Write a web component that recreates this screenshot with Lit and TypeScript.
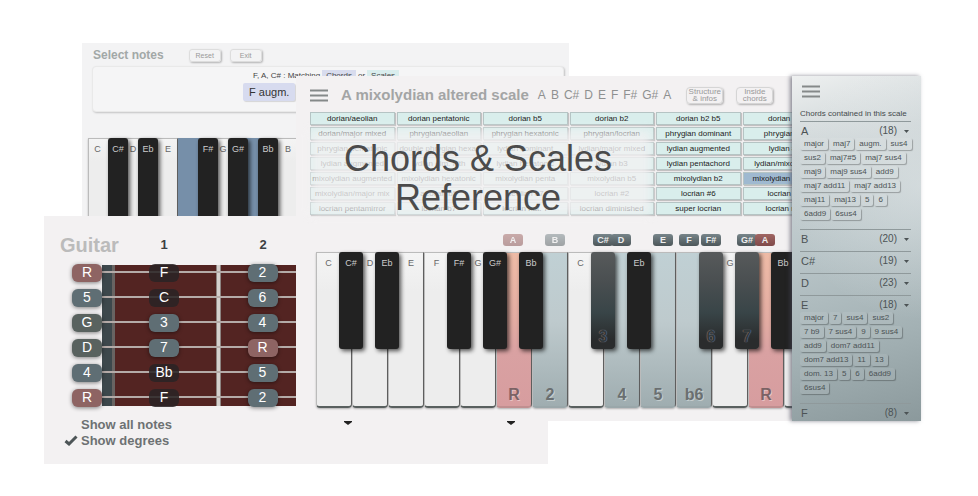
import { LitElement, html, css, svg, nothing } from "lit";
import { customElement, property } from "lit/decorators.js";
import { classMap } from "lit/directives/class-map.js";

type Tone = "" | "root" | "on" | "blue";
interface Black { name: string; tone?: Tone; degree?: string; badge?: string }
interface Key { name: string; lean: "left" | "mid" | "right"; tone?: Tone; degree?: string; badge?: Tone; faint?: boolean; black?: Black }

const resetButton = css`
  *, *::before, *::after { box-sizing: border-box; }
  button { font: inherit; color: inherit; border: 0; padding: 0; margin: 0; background: none; cursor: pointer; }
  p, h1, h2, h3, ul { margin: 0; padding: 0; }
`;

@customElement("piano-keyboard")
class PianoKeyboard extends LitElement {
  @property({ attribute: false }) keys: Key[] = [];

  static styles = [resetButton, css`
    :host { display: flex; isolation: isolate; font-size: 9px; --w: var(--white-width, 36px); --b: var(--black-width, 24px); }
    .slot { position: relative; flex: none; width: var(--w); height: var(--key-height, 156px); }
    .white {
      display: flex; flex-direction: column; justify-content: space-between; align-items: center;
      width: 100%; height: 100%; padding: 4px 0 2px; color: #666;
      background: linear-gradient(#f4f4f4, #ededed 25%);
      border: 1px solid #bbb; border-right-color: #666; border-bottom: 2px solid #59605f; border-radius: 0 0 4px 4px;
      box-shadow: 0 1px 2px #0004;
    }
    .white.on { background: linear-gradient(#c0d0d4, #becacd 45%, #9fadb0); border-bottom-color: #9aa7aa; }
    .white.root { background: linear-gradient(#eebba6, #e2aba2 45%, #d9a1a2 65%, #d79d9f); border-bottom-color: #c08f90; }
    .white.blue { background: #768fa9; border-color: #768fa9; }
    .name { height: 12px; line-height: 12px; }
    .left .name { margin-right: 11px; }
    .right .name { margin-left: 10px; }
    .degree { font-weight: 700; font-size: 16px; line-height: 18px; color: #6a6f70; text-shadow: 1px 1px 0 #fff6; }
    .root .degree { color: #7b6264; }
    .black {
      position: absolute; z-index: 1; top: 0; right: calc(var(--b) / -2 + var(--shift, 1px));
      display: flex; flex-direction: column; justify-content: space-between; align-items: center;
      width: var(--b); height: var(--black-height, 97px); padding: 5px 0 3px; color: #ccc;
      background: #222; border-radius: 3px; box-shadow: 2px 2px 4px #000a;
    }
    .black.on { background: linear-gradient(#575a5b, #4a4f51 30%, #394548 62%, #2a2c2d 90%); }
    .black .degree { color: #32393b; text-shadow: 0 0 1px #aab; }
    .badge {
      position: absolute; z-index: 2; top: -18px; width: 20px; height: 12px; border-radius: 3px;
      font-weight: 700; font-size: 9px; line-height: 12px; text-align: center; color: #eee;
      background: linear-gradient(#77858a, #4c5659);
    }
    .badge.root { background: linear-gradient(#a06663, #804a4a); }
    .badge.faint { opacity: .5; }
    .badge.left { left: 3px; }
    .badge.mid { left: 7px; }
    .badge.right { left: 13px; }
    .badge.sharp { right: calc(1px - 10px); }
  `];

  render() {
    return this.keys.map(k => html`
      <div class="slot">
        <button class=${classMap({ white: true, [k.lean]: true, [k.tone || "plain"]: true })} aria-label=${k.name}>
          <span class="name">${k.tone ? nothing : k.name}</span>
          ${k.degree ? html`<span class="degree">${k.degree}</span>` : nothing}
        </button>
        ${k.badge ? html`<span class=${classMap({ badge: true, [k.badge]: true, [k.lean]: true, faint: !!k.faint })}>${k.name}</span>` : nothing}
        ${k.black ? html`
          <button class=${classMap({ black: true, on: k.black.tone === "on" })} aria-label=${k.black.name}>
            <span class="name">${k.black.tone ? nothing : k.black.name}</span>
            ${k.black.degree ? html`<span class="degree">${k.black.degree}</span>` : nothing}
          </button>
          ${k.black.badge ? html`<span class="badge sharp">${k.black.badge}</span>` : nothing}` : nothing}
      </div>`);
  }
}

const selectKeys: Key[] = [
  { name: "C", lean: "left", black: { name: "C#" } },
  { name: "D", lean: "mid", black: { name: "Eb" } },
  { name: "E", lean: "right" },
  { name: "F", lean: "left", tone: "blue", black: { name: "F#" } },
  { name: "G", lean: "mid", black: { name: "G#" } },
  { name: "A", lean: "mid", tone: "blue", black: { name: "Bb" } },
  { name: "B", lean: "right" },
];

const scaleKeys: Key[] = [
  { name: "C", lean: "left", black: { name: "C#" } },
  { name: "D", lean: "mid", black: { name: "Eb" } },
  { name: "E", lean: "right" },
  { name: "F", lean: "left", black: { name: "F#" } },
  { name: "G", lean: "mid", black: { name: "G#" } },
  { name: "A", lean: "mid", tone: "root", degree: "R", badge: "root", faint: true, black: { name: "Bb" } },
  { name: "B", lean: "right", tone: "on", degree: "2", badge: "on", faint: true },
  { name: "C", lean: "left", black: { name: "C#", tone: "on", degree: "3", badge: "C#" } },
  { name: "D", lean: "mid", tone: "on", degree: "4", badge: "on", black: { name: "Eb" } },
  { name: "E", lean: "right", tone: "on", degree: "5", badge: "on" },
  { name: "F", lean: "left", tone: "on", degree: "b6", badge: "on", black: { name: "F#", tone: "on", degree: "6", badge: "F#" } },
  { name: "G", lean: "mid", black: { name: "G#", tone: "on", degree: "7", badge: "G#" } },
  { name: "A", lean: "mid", tone: "root", degree: "R", badge: "root", black: { name: "Bb" } },
  { name: "B", lean: "right" },
];

const scales = [
  ["dorian/aeolian", "dorian pentatonic", "dorian b5", "dorian b2", "dorian b2 b5", "dorian #4"],
  ["dorian/major mixed", "phrygian/aeolian", "phrygian hexatonic", "phrygian/locrian", "phrygian dominant", "phrygian b4"],
  ["phrygian pentatonic", "double phrygian hexa.", "lydian dominant", "lydian/major mixed", "lydian augmented", "lydian #2"],
  ["lydian augmented", "lydian dim. fifth", "lydian hexatonic", "lydian b3", "lydian pentachord", "lydian/mixolydian"],
  ["mixolydian augmented", "mixolydian hexatonic", "mixolydian penta", "mixolydian b5", "mixolydian b2", "mixolydian altered"],
  ["mixolydian/major mix", "aeolian b5", "aeolian #7", "locrian #2", "locrian #6", "locrian #7"],
  ["locrian pentamirror", "locrian b7", "locrian nat. 7", "locrian diminished", "super locrian", "locrian maj"],
];

const chordGroups: { note: string; count: number; chords?: string[] }[] = [
  { note: "A", count: 18, chords: ["major", "maj7", "augm.", "sus4", "sus2", "maj7#5", "maj7 sus4", "maj9", "maj9 sus4", "add9", "maj7 add11", "maj7 add13", "maj11", "maj13", "5", "6", "6add9", "6sus4"] },
  { note: "B", count: 20 },
  { note: "C#", count: 19 },
  { note: "D", count: 23 },
  { note: "E", count: 18, chords: ["major", "7", "sus4", "sus2", "7 b9", "7 sus4", "9", "9 sus4", "add9", "dom7 add11", "dom7 add13", "11", "13", "dom. 13", "5", "6", "6add9", "6sus4"] },
  { note: "F", count: 8 },
];

const strings = [["R", "F", "2"], ["5", "C", "6"], ["G", "3", "4"], ["D", "7", "R"], ["4", "Bb", "5"], ["R", "F", "2"]];

const noteTone = (n: string, col: number) =>
  n === "R" ? "root" : /[A-G]/.test(n) ? (col ? "dark" : "open") : "slate";

@customElement("select-notes")
class SelectNotes extends LitElement {
  static styles = [resetButton, css`
    :host { display: flex; flex-direction: column; background: #f3f3f4; padding: 5px 5px 0; overflow: hidden; }
    header { display: flex; flex: none; align-items: center; gap: 9px; height: 14px; padding-left: 6px; }
    h2 { font-size: 12px; line-height: 14px; color: #a2a8a7; margin-right: 16px; }
    header button { width: 32px; height: 13px; font-size: 7px; color: #999; border: 1px solid #ddd; border-radius: 3px; box-shadow: 1px 1px 2px #0004; }
    .panel { flex: none; height: 46px; margin: 4px 0 0 5px; padding: 3px 0 0 150px; border: 1px solid #e9e9e9; border-radius: 4px; background: #f5f5f6; box-shadow: 1px 1px 2px #0003; }
    p { display: flex; align-items: center; gap: 2px; height: 10px; padding-left: 10px; font-size: 8px; white-space: nowrap; color: #444; }
    p button { height: 10px; padding: 0 4px; background: #d8dcee; }
    p button.scales { background: #d9eded; }
    .chord { height: 18px; margin-top: 3px; padding: 0 6px; font-size: 11px; line-height: 18px; color: #333; background: #d7dbef; border-radius: 2px; box-shadow: 1px 1px 1px #0002; }
    piano-keyboard { --white-width: 30px; --black-width: 20px; --key-height: 90px; --black-height: 86px; --shift: 0px; margin: 26px 0 0 1px; }
  `];
  render() {
    return html`
      <header><h2>Select notes</h2><button>Reset</button><button>Exit</button></header>
      <section class="panel">
        <p>F, A, C# : Matching <button>Chords</button> or <button class="scales">Scales</button></p>
        <button class="chord">F augm.</button>
      </section>
      <piano-keyboard .keys=${selectKeys}></piano-keyboard>`;
  }
}

@customElement("guitar-neck")
class GuitarNeck extends LitElement {
  static styles = [resetButton, css`
    :host { display: block; background: #f3f1f2; padding: 17px 0 16px 16px; }
    .head { display: grid; grid-template-columns: 60px 88px 110px; align-items: center; text-align: center; font-weight: 700; font-size: 13px; line-height: 24px; color: #3c4042; }
    h2 { font-size: 20px; line-height: 24px; color: #bbb; text-align: left; }
    .neck { position: relative; display: grid; gap: 7px; margin-top: 7px; padding: 0 0 0 12px; }
    .board { position: absolute; inset: 1px 0 1px 42px; width: 240px;
      background: linear-gradient(90deg, #3d484c 0 10px, #686462 10px 13px, #532422 13px 114px, #8d8481 114px 115px, #d5d1ce 115px 118px, #8d8481 118px 119px, #532422 119px); }
    .string { position: relative; display: grid; grid-template-columns: 30px 14px 96px 101px; align-items: center; height: 18px; }
    .string::before { content: ""; position: absolute; left: 29px; top: 7px; width: 210px; height: 2px; background: #b5aba8; }
    .note { position: relative; justify-self: center; width: 30px; height: 18px; border-radius: 6px; color: #fff; font-size: 14px; line-height: 16px; text-align: center; box-shadow: 0 1px 4px #0007; }
    .root { background: #8e6463; }
    .slate { background: #5f6e74; }
    .open { background: #59625f; }
    .dark { background: #292425dd; box-shadow: none; }
    .fret1 { grid-column: 3; }
    .options { display: grid; gap: 1px; margin-top: 10px; font-weight: 700; font-size: 13px; line-height: 15px; color: #6d7173; }
    label { display: grid; grid-template-columns: 21px auto; justify-content: start; align-items: center; }
    label input { grid-area: 1 / 1; appearance: none; width: 15px; height: 13px; margin: 0 0 0 3px; }
    label svg { grid-area: 1 / 1; margin-left: 4px; pointer-events: none; visibility: hidden; }
    input:checked + svg { visibility: visible; }
  `];
  private option(text: string, on: boolean) {
    return html`<label><input type="checkbox" .checked=${on}>
      ${html`<svg width="14" height="11" viewBox="0 0 14 11">${svg`<path d="M1.5 6 L5 9 L12.5 1.5" fill="none" stroke="#4d5557" stroke-width="3"/>`}</svg>`}
      <span>${text}</span></label>`;
  }
  render() {
    return html`
      <div class="head"><h2>Guitar</h2><span>1</span><span>2</span></div>
      <div class="neck">
        <div class="board"></div>
        ${strings.map(s => html`<div class="string">
          ${s.map((n, i) => html`<span class="note ${noteTone(n, i)} ${i === 1 ? "fret1" : ""}">${n}</span>`)}
        </div>`)}
      </div>
      <div class="options">${this.option("Show all notes", false)}${this.option("Show degrees", true)}</div>`;
  }
}

const menuIcon = html`<svg width="18" height="13" viewBox="0 0 18 13"><path d="M0 1.5H18M0 6.5H18M0 11.5H18" stroke="#858989" stroke-width="2"/></svg>`;

@customElement("chord-list")
class ChordList extends LitElement {
  static styles = [resetButton, css`
    :host { display: block; padding: 9px 10px 0 8px; color: #4c5355;
      background: radial-gradient(circle at 100% 32%, #eef1f266, transparent 50%), linear-gradient(165deg, #eef0f0 0%, #ccd4d6 22%, #b9c5c8 48%, #a3b1b4 75%, #8b999c 100%);
      box-shadow: -2px 0 4px #4459; overflow: hidden; }
    .menu { display: block; height: 13px; margin-left: 2px; }
    h3 { font-weight: 400; font-size: 8px; line-height: 10px; margin: 11px 0 2px; white-space: nowrap; color: #444a4c; }
    section { border-top: 1px solid #8f999b; padding: 2px 0 5px; }
    section:last-child { padding-bottom: 1px; }
    .group { display: grid; grid-template-columns: 1fr auto 14px; width: 100%; align-items: center; height: 14px; font-size: 10px; line-height: 14px; padding-left: 1px; text-align: left; }
    .note { font-size: 11px; }
    svg { justify-self: end; display: block; }
    .group svg { margin-right: 2px; }
    .chips { display: flex; flex-wrap: wrap; gap: 2px 1px; margin-right: -4px; padding: 0 0 4px; }
    .chips button { height: 12px; padding: 0 4px; font-size: 8px; line-height: 12px; border-radius: 2px; box-shadow: 1px 1px 1px #0004; background: #ffffff14; white-space: nowrap; }
  `];
  render() {
    return html`
      <button class="menu" aria-label="Menu">${menuIcon}</button>
      <h3>Chords contained in this scale</h3>
      ${chordGroups.map(g => html`<section>
        <button class="group"><span class="note">${g.note}</span><span>(${g.count})</span>
          <svg width="5" height="3" viewBox="0 0 5 3"><path d="M0 0H5L2.5 3Z" fill="#4c5355"/></svg></button>
        ${g.chords ? html`<div class="chips">${g.chords.map(c => html`<button>${c}</button>`)}</div>` : nothing}
      </section>`)}`;
  }
}

@customElement("scale-view")
class ScaleView extends LitElement {
  static styles = [resetButton, css`
    :host { display: grid; grid-template-columns: minmax(0, 1fr) 129px; background: #f3f1f2; }
    .main { position: relative; overflow-x: clip; padding-left: 14px; }
    header { display: flex; align-items: center; height: 36px; padding-top: 2px; color: #a3a5a5; white-space: nowrap; }
    header svg { display: block; }
    h2 { font-size: 15px; line-height: 18px; margin: 0 9px 0 13px; }
    ul { display: flex; gap: 5px; list-style: none; font-size: 12px; color: #8e9090; margin-right: 15px; }
    .tool { width: 37px; height: 17px; margin-right: 13px; font-size: 8px; line-height: 7px; color: #999; border: 1px solid #d5d5d5; border-radius: 4px; box-shadow: 1px 1px 2px #0004; }
    .scales { position: relative; display: grid; grid-template-columns: repeat(6, 1fr); gap: 2px; width: 517px; }
    .scales button { height: 13px; font-size: 8px; line-height: 11px; color: #222; white-space: nowrap; background: #d9eeec; border: 1px solid #b5c4c4; box-shadow: 1px 1px 1px #0003; }
    .scales .current { background: #9fb9d0; }
    .fog { position: absolute; inset: 18px 176px 0 0; background: #f3f2f3; opacity: .8; filter: blur(5px); }
    piano-keyboard { margin: 37px 0 0 6px; }
    .marks { position: absolute; top: 345px; left: 48px; display: flex; gap: 155px; }
    chord-list { position: relative; z-index: 3; }
  `];
  render() {
    const mark = html`<svg width="8" height="4" viewBox="0 0 8 4"><path d="M0 0H8V1L4 4L0 1Z" fill="#222"/></svg>`;
    return html`
      <div class="main">
        <header>
          <button aria-label="Menu">${menuIcon}</button>
          <h2>A mixolydian altered scale</h2>
          <ul>${["A", "B", "C#", "D", "E", "F", "F#", "G#", "A"].map(n => html`<li>${n}</li>`)}</ul>
          <button class="tool">Structure<br>&amp; infos</button>
          <button class="tool">Inside<br>chords</button>
        </header>
        <div class="scales">
          ${scales.flat().map(s => html`<button class=${classMap({ current: s === "mixolydian altered" })}>${s}</button>`)}
          <div class="fog"></div>
        </div>
        <piano-keyboard .keys=${scaleKeys}></piano-keyboard>
        <div class="marks">${mark}${mark}</div>
      </div>
      <chord-list></chord-list>`;
  }
}

@customElement("app-root")
class AppRoot extends LitElement {
  static styles = [resetButton, css`
    :host { display: block; position: relative; min-height: 496px; background: #fff; font-family: "Liberation Sans", Arial, sans-serif; overflow: hidden; }
    select-notes, guitar-neck, scale-view, h1 { position: absolute; isolation: isolate; }
    select-notes { inset: 43px 409px auto 82px; height: 173px; }
    guitar-neck { inset: 216px 430px auto 44px; }
    scale-view { inset: 76px 57px auto 296px; }
    h1 { inset: 139px 22px auto 0; z-index: 4; font-weight: 400; font-size: 36px; line-height: 39px; text-align: center; color: #4b4b4b; pointer-events: none; }
  `];
  render() {
    return html`
      <select-notes></select-notes>
      <guitar-neck></guitar-neck>
      <scale-view></scale-view>
      <h1>Chords &amp; Scales<br>Reference</h1>`;
  }
}
